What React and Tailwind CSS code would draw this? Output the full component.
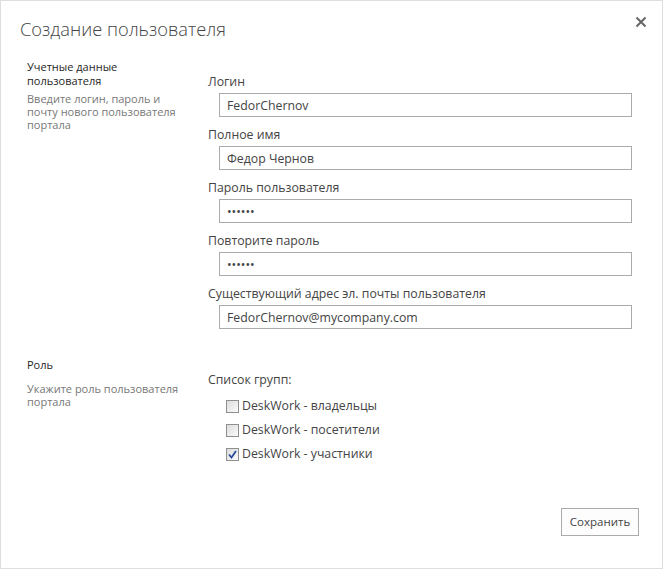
import { useState } from 'react';

const font = { fontFamily: '"Open Sans", "Noto Sans", sans-serif' };

function Field({ label, value, type = 'text' }) {
  return (
    <div className="flex flex-col">
      <label className="h-[16px] text-[12.3px] leading-[16px] text-[#444]">{label}</label>
      <input
        type={type}
        defaultValue={value}
        className="ml-[11px] mt-[3px] h-[24px] w-[413px] border border-[#ababab] bg-white px-[7px] text-[12.3px] text-[#444] outline-none"
      />
    </div>
  );
}

function Check({ label, checked }) {
  const [on, setOn] = useState(checked);
  return (
    <label className="flex h-[24px] items-center gap-[3px] text-[12.3px] text-[#444]">
      <button
        type="button"
        onClick={() => setOn(!on)}
        className="flex h-[13px] w-[13px] items-center justify-center border border-[#8e8f8f] bg-gradient-to-br from-[#dcdcdc] to-[#fbfbfb] p-0"
      >
        {on && (
          <svg width="9" height="9" viewBox="0 0 9 9">
            <path d="M1 4.5 L3.5 7.5 L8 1" fill="none" stroke="#2a4d9e" strokeWidth="1.8" />
          </svg>
        )}
      </button>
      <span>{label}</span>
    </label>
  );
}

export default function App() {
  return (
    <div style={font} className="relative h-[569px] w-[663px] border border-[#dedede] bg-white">
      <header className="flex items-start justify-between pl-[19px] pr-[15px] pt-[14px]">
        <h1 className="text-[18.3px] font-light leading-[28px] text-[#444]">Создание пользователя</h1>
        <button type="button" className="mt-[1px] text-[#666]">
          <svg width="12" height="12" viewBox="0 0 12 12">
            <path d="M1.5 1.5 L10.5 10.5 M10.5 1.5 L1.5 10.5" stroke="#666" strokeWidth="2" />
          </svg>
        </button>
      </header>

      <section className="mt-[17px] flex">
        <div className="w-[207px] pl-[26px] pr-[20px]">
          <p className="text-[11px] leading-[14px] text-[#262626]">Учетные данные пользователя</p>
          <p className="mt-[4px] text-[11px] leading-[13px] text-[#777]">
            Введите логин, пароль и почту нового пользователя портала
          </p>
        </div>
        <div className="mt-[14px] flex flex-col gap-[10px]">
          <Field label="Логин" value="FedorChernov" />
          <Field label="Полное имя" value="Федор Чернов" />
          <Field label="Пароль пользователя" value="qwerty" type="password" />
          <Field label="Повторите пароль" value="qwerty" type="password" />
          <Field label="Существующий адрес эл. почты пользователя" value="FedorChernov@mycompany.com" />
        </div>
      </section>

      <section className="mt-[29px] flex">
        <div className="w-[207px] pl-[26px] pr-[20px]">
          <p className="text-[11px] leading-[14px] text-[#262626]">Роль</p>
          <p className="mt-[10px] text-[11px] leading-[13px] text-[#777]">Укажите роль пользователя портала</p>
        </div>
        <div className="mt-[14px]">
          <p className="text-[12.3px] leading-[16px] text-[#444]">Список групп:</p>
          <div className="ml-[18px] mt-[6px] flex flex-col">
            <Check label="DeskWork - владельцы" />
            <Check label="DeskWork - посетители" />
            <Check label="DeskWork - участники" checked />
          </div>
        </div>
      </section>

      <div className="absolute bottom-[32px] right-[23px]">
        <button type="button" className="h-[28px] w-[78px] border border-[#ababab] bg-[#fdfdfd] text-[11.5px] text-[#444]">
          Сохранить
        </button>
      </div>
    </div>
  );
}
